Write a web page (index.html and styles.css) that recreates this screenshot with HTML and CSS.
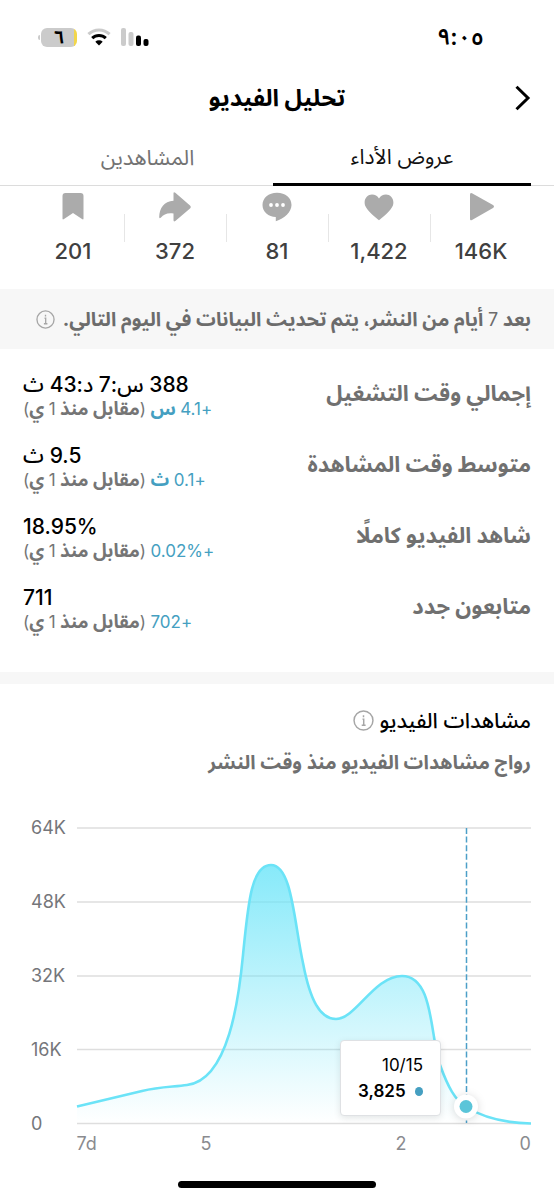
FILE: index.html
```html
<!DOCTYPE html>
<html lang="ar" dir="rtl">
<head>
  <meta charset="UTF-8" />
  <meta name="viewport" content="width=device-width, initial-scale=1.0" />
  <title>تحليل الفيديو</title>
  <link rel="stylesheet" href="styles.css">
</head>
<body>

<div class="status-bar">
  <span class="clock">٩:٠٥</span>
  <div class="status-icons">
    <svg width="28" height="18" viewBox="0 0 28 18">
      <rect x="0" y="0" width="5" height="18" rx="2" fill="#cbcbcb"/>
      <rect x="7.5" y="4" width="5" height="14" rx="2" fill="#cbcbcb"/>
      <rect x="15" y="7.5" width="5" height="10.5" rx="2"/>
      <rect x="22.5" y="11" width="5" height="7" rx="2"/>
    </svg>
    <svg width="24" height="18" viewBox="0 0 24 18" fill="none" stroke-width="3">
      <path d="M1.4 6.2a15.3 15.3 0 0 1 21.2 0" stroke="#cbcbcb"/>
      <path d="M5.2 10.2a9.8 9.8 0 0 1 13.6 0" stroke="#000"/>
      <path d="M8.3 13.8a5.4 5.4 0 0 1 7.4 0L12 17.6z" fill="#000"/>
    </svg>
    <div class="battery"><span>٦</span></div>
  </div>
</div>

<header>
  <svg class="back" width="16" height="26" viewBox="0 0 16 26" fill="none" stroke="#000" stroke-width="3">
    <path d="M1.5 1.8L13 13 1.5 24.2"/>
  </svg>
  <h1>تحليل الفيديو</h1>
</header>

<nav>
  <a class="active">عروض الأداء</a>
  <a>المشاهدين</a>
</nav>

<section class="stats">
  <div class="stat">
    <svg width="28" height="30" viewBox="0 0 28 30"><path d="M3 2.500Q3 .3 5 1.200L26 13q2 1.500 0 3L5 28Q3 29 3 27z"/></svg>
    <span>146K</span>
  </div>
  <div class="stat">
    <svg width="30" height="30" viewBox="0 0 30 30"><path d="M15 28.200C12.500 26.500 2.500 18 1.100 13.500C-.8 7.500 3.200 2.500 8 2.500c3 0 5.500 1.500 7 4c1.500-2.500 4-4 7-4c4.800 0 8.800 5 6.900 11C27.500 18 17.500 26.500 15 28.200z"/></svg>
    <span>1,422</span>
  </div>
  <div class="stat">
    <svg width="30" height="30" viewBox="0 0 30 30">
      <path d="M15 .8C6.500.8.500 6.200.500 13S6.500 25 13.800 25v4.200C22.500 26.500 29.500 20 29.500 13S23.500.8 15 .8z"/>
      <g fill="#fff"><circle cx="9" cy="13" r="1.900"/><circle cx="15" cy="13" r="1.900"/><circle cx="21" cy="13" r="1.900"/></g>
    </svg>
    <span>81</span>
  </div>
  <div class="stat">
    <svg width="34" height="30" viewBox="0 0 34 30"><path d="M15.500 1.500q0-2 1.800-.7L32 13.500q1.500 1.500 0 3L17.300 29q-1.800 1.300-1.800-1V21.500C9.500 20.500 5.500 22.500 3 25.500Q1.200 27 1.200 25C1.500 16 6 9.500 15.500 8.800z"/></svg>
    <span>372</span>
  </div>
  <div class="stat">
    <svg width="24" height="30" viewBox="0 0 24 30"><path d="M1.500 4q0-3 3-3h15q3 0 3 3v22.500q0 1.500-1.500.6L12 21l-9 6.100q-1.500.9-1.500-.6z"/></svg>
    <span>201</span>
  </div>
</section>

<div class="notice">
  <p>بعد <span class="num">7</span> أيام من النشر، يتم تحديث البيانات في اليوم التالي.</p>
  <svg class="info" width="19" height="19" viewBox="0 0 20 20"><circle cx="10" cy="10" r="9"/><path d="M9 8.700h1.200v5.600M8.300 14.500h3.700M10 5v1.800"/></svg>
</div>

<section class="metrics">
  <div class="metric">
    <h2>إجمالي وقت التشغيل</h2>
    <div class="result">
      <p class="value"><b>388</b> س<b>:7</b> د<b>:43</b> ث</p>
      <p class="change"><span class="up"><b>+4.1</b> س</span> <b>(</b>مقابل منذ <b>1</b> ي<b>)</b></p>
    </div>
  </div>
  <div class="metric">
    <h2>متوسط وقت المشاهدة</h2>
    <div class="result">
      <p class="value"><b>9.5</b> ث</p>
      <p class="change"><span class="up"><b>+0.1</b> ث</span> <b>(</b>مقابل منذ <b>1</b> ي<b>)</b></p>
    </div>
  </div>
  <div class="metric">
    <h2>شاهد الفيديو كاملًا</h2>
    <div class="result">
      <p class="value"><b>18.95%</b></p>
      <p class="change"><span class="up"><b>+0.02%</b></span> <b>(</b>مقابل منذ <b>1</b> ي<b>)</b></p>
    </div>
  </div>
  <div class="metric">
    <h2>متابعون جدد</h2>
    <div class="result">
      <p class="value"><b>711</b></p>
      <p class="change"><span class="up"><b>+702</b></span> <b>(</b>مقابل منذ <b>1</b> ي<b>)</b></p>
    </div>
  </div>
</section>

<section class="views">
  <div class="views-title">
    <h3>مشاهدات الفيديو</h3>
    <svg class="info" width="21" height="21" viewBox="0 0 20 20"><circle cx="10" cy="10" r="9"/><path d="M9 8.700h1.200v5.600M8.300 14.500h3.700M10 5v1.800"/></svg>
  </div>
  <p class="subtitle">رواج مشاهدات الفيديو منذ وقت النشر</p>

  <div class="chart">
    <svg width="554" height="360" viewBox="0 800 554 360" direction="ltr">
      <defs>
        <linearGradient id="fill" x1="0" y1="864" x2="0" y2="1123" gradientUnits="userSpaceOnUse">
          <stop offset="0" stop-color="#68e4f8" stop-opacity=".8"/>
          <stop offset="1" stop-color="#68e4f8" stop-opacity="0"/>
        </linearGradient>
      </defs>
      <path class="grid" d="M77 828H531M77 902H531M77 976H531M77 1049.500H531M77 1123.500H531"/>
      <path fill="url(#fill)" d="M77 1106.500L142 1091C160 1086.500 174 1087 187 1085C229 1080 239 997 243 955C248 905 251 865 271 865C292 865 294 922 303 963C310 1000 320 1019 336 1019C356 1019 374 976 402 976C434 976 430 1037 440 1065C448 1087 455 1100 466 1107C484 1118 504 1123 531 1123.500H77z"/>
      <path class="line" d="M77 1106.500L142 1091C160 1086.500 174 1087 187 1085C229 1080 239 997 243 955C248 905 251 865 271 865C292 865 294 922 303 963C310 1000 320 1019 336 1019C356 1019 374 976 402 976C434 976 430 1037 440 1065C448 1087 455 1100 466 1107C484 1118 504 1123 531 1123.500"/>
      <path class="cursor" d="M466.500 828V1123"/>
      <circle class="halo" cx="466" cy="1106.500" r="12"/>
      <circle cx="466" cy="1106.500" r="6.500" fill="#5bc5d9"/>
      <g class="y-labels">
        <text x="31" y="834">64K</text>
        <text x="31" y="908">48K</text>
        <text x="31" y="982">32K</text>
        <text x="31" y="1055.500">16K</text>
        <text x="31" y="1129.500">0</text>
      </g>
      <g class="x-labels">
        <text x="76.500" y="1150">7d</text>
        <text x="200.500" y="1150">5</text>
        <text x="395.500" y="1150">2</text>
        <text x="519.500" y="1150">0</text>
      </g>
    </svg>
    <div class="tooltip">
      <span>10/15</span>
      <strong><i></i>3,825</strong>
    </div>
  </div>
</section>

<div class="home-bar"></div>

</body>
</html>
```

FILE: styles.css
```css
* {
  box-sizing: border-box;
}
body {
  margin: 0;
  width: 554px;
  height: 1200px;
  overflow: hidden;
  background: #fff;
  color: #000;
  font-family: Inter, "Noto Sans Arabic", "DejaVu Sans", sans-serif;
}
h1, h2, h3, p {
  margin: 0;
  white-space: nowrap;
}
.status-bar {
  height: 62px;
  padding: 12px 70px 0 38px;
  display: flex;
  justify-content: space-between;
  align-items: center;
}
.clock {
  font-size: 23px;
  font-weight: 600;
  letter-spacing: -1px;
  line-height: 24px;
}
.status-icons {
  display: flex;
  align-items: center;
  gap: 10px;
}
.battery {
  width: 36px;
  height: 19px;
  margin-left: 3px;
  border-radius: 6px;
  background: linear-gradient(to left, #f2d64b 3px, #cbcbcb 3px);
  position: relative;
  display: flex;
  justify-content: center;
  align-items: center;
  font-size: 18px;
  line-height: 18px;
  font-weight: 700;
}
.battery::after {
  content: "";
  position: absolute;
  left: -3px;
  top: 7px;
  width: 2px;
  height: 5px;
  border-radius: 2px 0 0 2px;
  background: #cbcbcb;
}
header {
  height: 70px;
  padding: 2px 23px 0;
  display: grid;
  grid-template-columns: 16px 1fr 16px;
  align-items: center;
}
h1 {
  font-size: 23.7px;
  line-height: 30px;
  font-weight: 700;
  text-align: center;
}
nav {
  height: 54px;
  padding: 0 23px 0 19px;
  display: flex;
  border-bottom: 1px solid #dcdcdc;
}
nav a {
  flex: 1;
  height: 54px;
  padding-left: 3px;
  text-align: center;
  line-height: 50px;
  font-size: 21.5px;
  color: #737373;
}
nav a.active {
  flex: 0 0 258px;
  padding: 0;
  font-size: 21px;
  color: #111;
  border-bottom: 3px solid #000;
}
.stats {
  height: 103px;
  padding: 6px 22px 0;
  display: flex;
}
.stat {
  flex: 1;
  display: flex;
  flex-direction: column;
  align-items: center;
  gap: 17px;
  background: linear-gradient(#e6e6e6, #e6e6e6) left 22px / 1px 28px no-repeat;
}
.stat:last-child {
  background: none;
}
.stat svg {
  fill: #ababab;
}
.stat span {
  font-size: 22px;
  line-height: 24px;
  font-weight: 500;
  color: #404040;
}
.notice {
  height: 60px;
  padding: 0 23px;
  display: flex;
  align-items: center;
  gap: 8px;
  background: #f7f7f7;
  color: #6c6c6c;
}
.notice p {
  font-size: 19.6px;
  line-height: 28px;
  font-weight: 700;
}
.num {
  font-size: 18px;
  font-weight: 400;
}
.info {
  fill: none;
  stroke: #a6a6a6;
  stroke-width: 1.4;
}
.metrics {
  height: 323px;
  padding: 24px 23px 0;
}
.metric {
  height: 71px;
  display: flex;
  justify-content: space-between;
}
.metric h2 {
  font-size: 22px;
  line-height: 41px;
  font-weight: 700;
  color: #707070;
}
.result {
  direction: rtl;
  text-align: left;
}
.value {
  font-size: 21px;
  line-height: 24px;
  font-weight: 500;
}
.value b {
  font-weight: 500;
}
.change {
  font-size: 18.5px;
  line-height: 23px;
  font-weight: 700;
  color: #757575;
}
.change b {
  font-size: 17px;
  font-weight: 400;
}
.up {
  color: #459fc1;
}
.views {
  border-top: 12px solid #f7f7f7;
  padding-top: 22px;
}
.views-title {
  height: 28px;
  padding: 0 23px;
  display: flex;
  align-items: center;
  gap: 5px;
}
h3 {
  font-size: 21.2px;
  line-height: 28px;
  font-weight: 500;
}
.subtitle {
  padding: 0 23px;
  margin-top: 14px;
  height: 52px;
  line-height: 28px;
  font-size: 19.5px;
  font-weight: 700;
  color: #707070;
}
.chart {
  position: relative;
  height: 360px;
}
.chart svg {
  display: block;
}
.grid {
  stroke: #dedede;
  stroke-width: 1.5;
}
.line {
  fill: none;
  stroke: #6be3f7;
  stroke-width: 2.6;
}
.cursor {
  stroke: #4c9fc8;
  stroke-width: 1.5;
  stroke-dasharray: 6 2.6;
}
.halo {
  fill: #fff;
  filter: drop-shadow(0 1px 4px rgba(0,0,0,0.15));
}
.y-labels, .x-labels {
  font-size: 18px;
  fill: #75767a;
}
.x-labels {
  fill: #8a8b8f;
}
.tooltip {
  position: absolute;
  left: 340px;
  top: 240px;
  width: 101px;
  height: 76px;
  padding: 13px 17px;
  display: flex;
  flex-direction: column;
  background: #fff;
  border: 1px solid #dfe1e4;
  border-radius: 4px;
  box-shadow: 0 2px 7px rgba(0,0,0,0.1);
  font-size: 17px;
  line-height: 23px;
}
.tooltip strong {
  display: flex;
  align-items: center;
  gap: 9px;
  font-size: 17px;
  line-height: 28px;
  font-weight: 600;
}
.tooltip i {
  width: 9px;
  height: 9px;
  border-radius: 50%;
  background: #459fc1;
}
.home-bar {
  width: 198px;
  height: 7px;
  margin: 21px auto 0;
  border-radius: 4px;
  background: #000;
}
```
